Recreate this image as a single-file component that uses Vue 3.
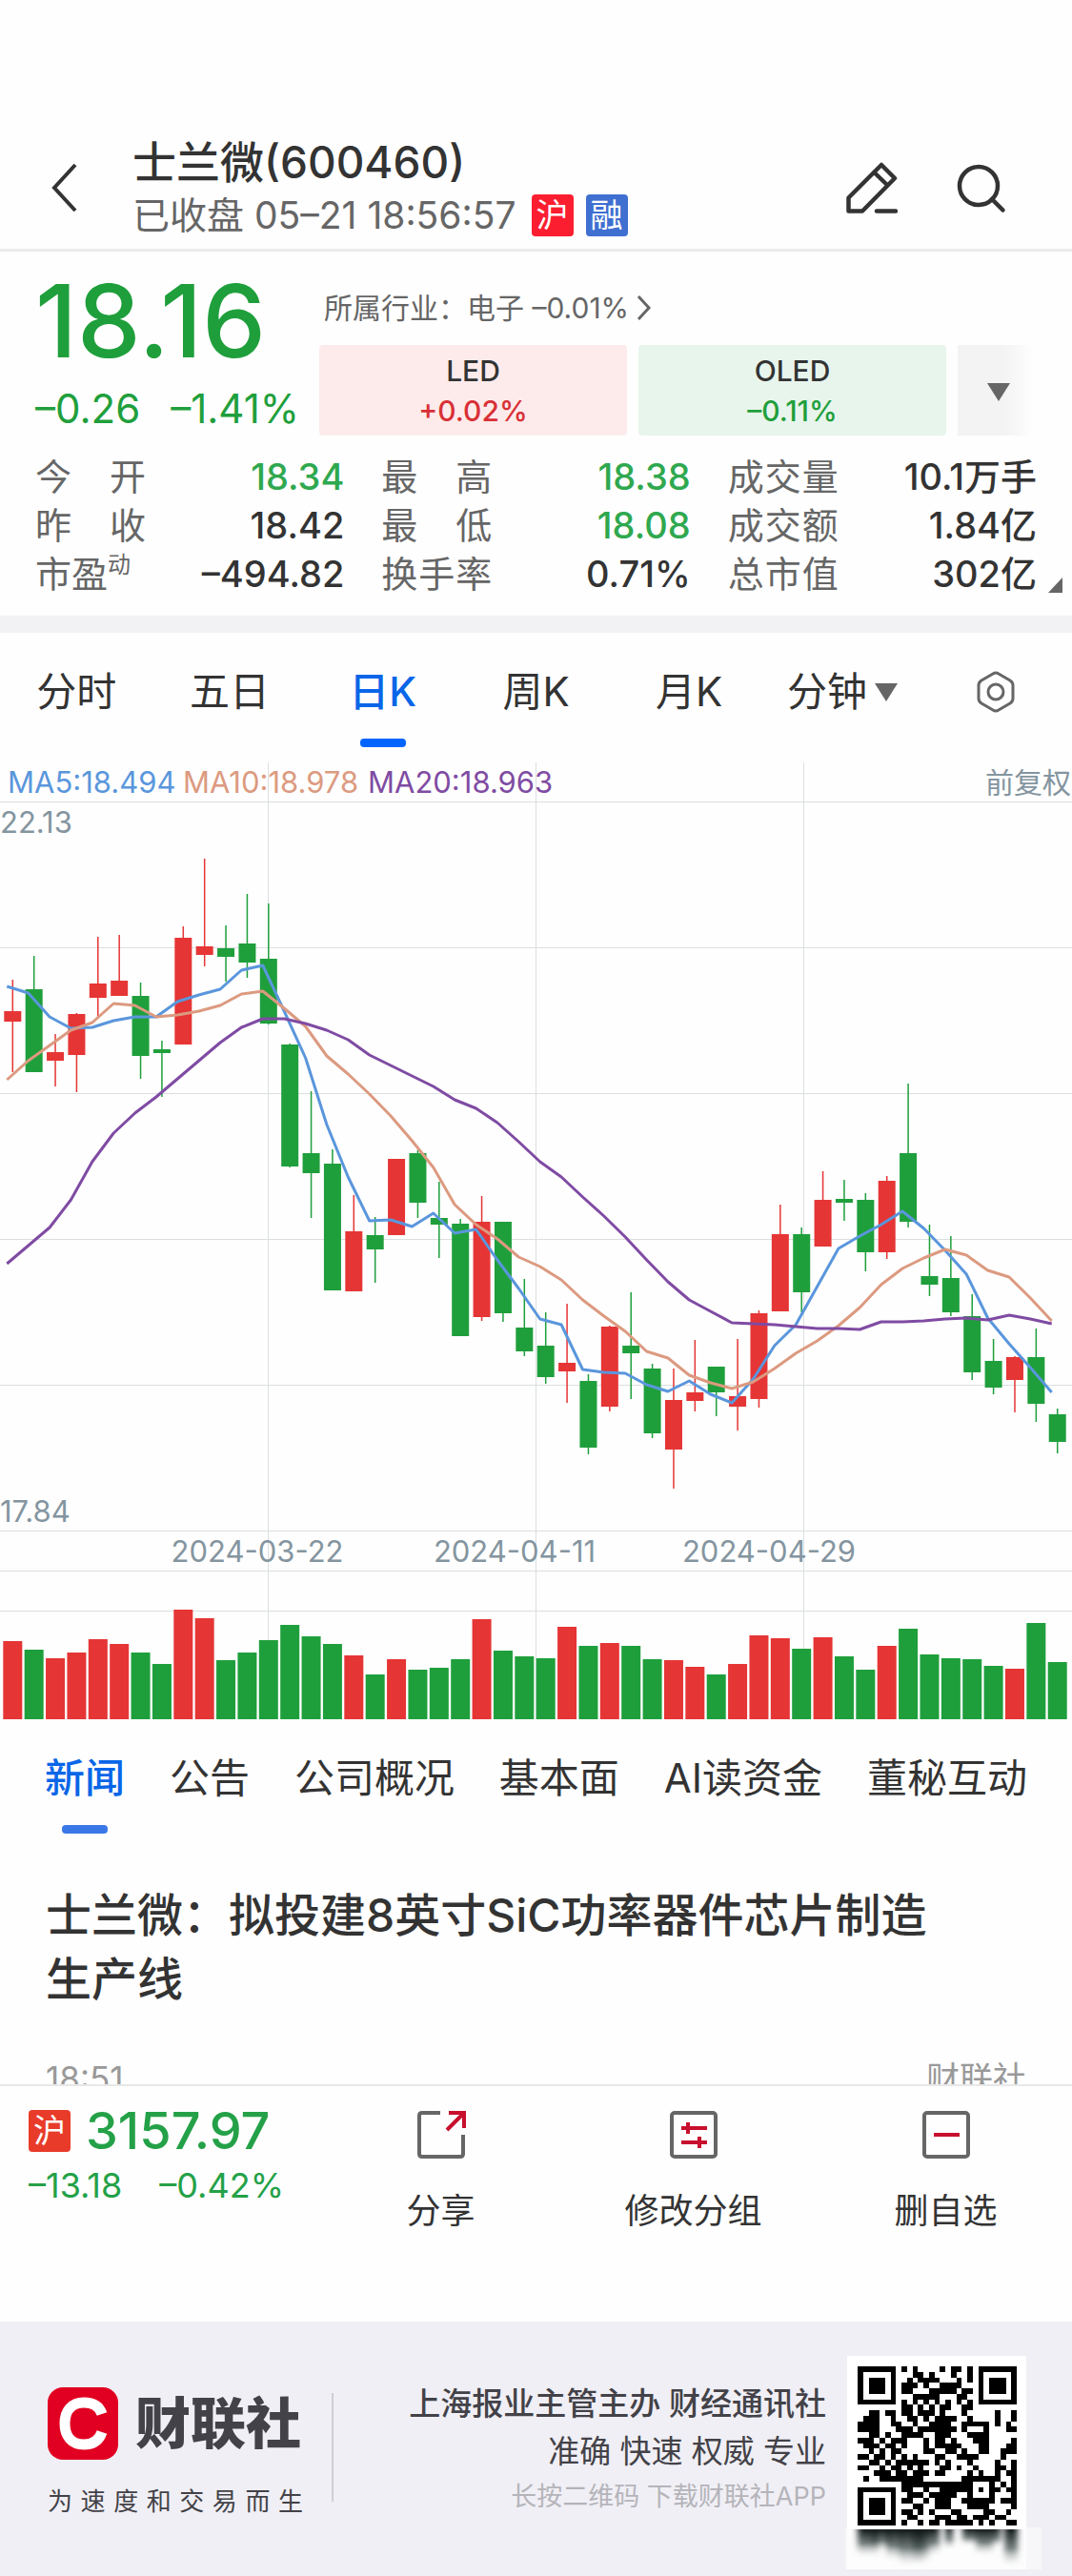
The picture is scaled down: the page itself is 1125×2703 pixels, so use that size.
<script setup>
const quoteStats = [
  { label: '今开', value: '18.34', down: true },
  { label: '最高', value: '18.38', down: true },
  { label: '成交量', value: '10.1万手' },
  { label: '昨收', value: '18.42' },
  { label: '最低', value: '18.08', down: true },
  { label: '成交额', value: '1.84亿' },
  { label: '市盈', sup: '动', value: '–494.82' },
  { label: '换手率', value: '0.71%' },
  { label: '总市值', value: '302亿' }
]

const periods = ['分时', '五日', '日K', '周K', '月K']
const newsTabs = ['新闻', '公告', '公司概况', '基本面', 'AI读资金', '董秘互动']

// Each candle: direction, high, body top, body bottom, low (chart units)
const candles = [
  ['r', 238, 271, 282, 335], ['g', 213, 248, 335, 335], ['r', 295, 314, 323, 350], ['r', 273, 274, 317, 356],
  ['r', 193, 242, 257, 278], ['r', 191, 239, 255, 255], ['g', 241, 255, 318, 342], ['g', 302, 311, 315, 361],
  ['r', 182, 194, 306, 306], ['r', 111, 203, 212, 224], ['g', 181, 205, 214, 240], ['g', 148, 200, 220, 236],
  ['g', 158, 216, 284, 285], ['g', 305, 306, 434, 435], ['g', 355, 420, 441, 488], ['g', 416, 431, 564, 564],
  ['r', 464, 502, 565, 565], ['g', 487, 506, 521, 556], ['r', 426, 426, 506, 506], ['g', 417, 420, 472, 488],
  ['g', 450, 488, 495, 530], ['g', 489, 494, 612, 612], ['r', 465, 492, 592, 596], ['g', 492, 492, 588, 597],
  ['g', 552, 603, 628, 633], ['g', 587, 622, 655, 662], ['r', 578, 640, 649, 682], ['g', 652, 659, 729, 736],
  ['r', 601, 602, 686, 691], ['g', 566, 622, 630, 678], ['g', 641, 646, 714, 719], ['r', 646, 679, 731, 772],
  ['r', 616, 671, 680, 691], ['g', 644, 644, 671, 696], ['r', 615, 675, 686, 711], ['r', 585, 588, 678, 687],
  ['r', 474, 505, 586, 586], ['g', 498, 505, 566, 587], ['r', 439, 469, 518, 518], ['g', 448, 468, 472, 491],
  ['g', 462, 469, 524, 544], ['r', 444, 449, 524, 531], ['g', 347, 420, 492, 498], ['g', 495, 549, 558, 570],
  ['g', 507, 551, 587, 591], ['g', 568, 591, 650, 658], ['g', 615, 638, 666, 673], ['r', 633, 634, 658, 692],
  ['g', 604, 634, 683, 702], ['g', 688, 694, 723, 735]
]
const volumes = [
  82, 73, 64, 70, 84, 79, 70, 58, 115, 106, 62, 70, 83, 99, 87, 79, 67, 47, 63, 52, 54, 63, 105, 72, 66,
  64, 97, 77, 80, 77, 63, 62, 55, 47, 58, 88, 85, 74, 86, 66, 52, 77, 95, 68, 64, 63, 56, 53, 101, 60
]
const ma5 = [
  245, 252, 277, 289, 288, 281, 277, 277, 261, 254, 248, 228, 223, 271, 320, 390, 445, 491, 490, 497, 483, 504, 500, 532, 562,
  594, 600, 647, 650, 651, 663, 670, 659, 673, 682, 657, 622, 600, 560, 520, 507, 495, 481, 499, 522, 547, 593, 620, 645, 671
]
const ma10 = [
  343, 323, 307, 291, 283, 263, 265, 277, 275, 271, 265, 253, 250, 268, 287, 318, 337, 358, 381, 407, 435, 474, 495, 510, 529,
  539, 553, 574, 591, 607, 628, 635, 653, 661, 667, 660, 646, 630, 617, 601, 582, 558, 541, 530, 521, 527, 543, 550, 572, 596
]
const ma20 = [
  536, 517, 498, 469, 429, 399, 378, 361, 342, 323, 304, 288, 279, 279, 284, 291, 301, 317, 328, 339, 350, 364, 373, 388, 408,
  429, 445, 466, 486, 508, 532, 555, 574, 586, 598, 599, 600, 602, 604, 604, 605, 597, 597, 596, 594, 593, 595, 590, 594, 599
]

const step = 22.376
const centre = (i) => 13.3 + i * step
const line = (values) => values.map((y, i) => `${(7.3 + i * step).toFixed(1)},${y}`).join(' ')
const colour = (dir) => (dir === 'r' ? '#e63535' : '#1f9f3c')

const rowLines = [51, 204, 357, 510, 663, 816, 858, 900]
const dateLines = [281, 562, 843]

const qr = [
  '11111110101000010110101111111',
  '10000010001101000100101000001',
  '10111010010111100010101011101',
  '10111010111010011110001011101',
  '10111010110001111101101011101',
  '10000010001111100011001000001',
  '11111110101010101010101111111',
  '00000000110101011001100000000',
  '00110110110111010001000001001',
  '01110010011010111100100001001',
  '11110011001001111001111101010',
  '11110001110111111101000100011',
  '00110100111100111000111100000',
  '11101011100010110100011100001',
  '01110110100010111110001100011',
  '00101011000011001101001100111',
  '11011010101000110011110000100',
  '00110101111110101000100001001',
  '11001011010100011010010001101',
  '00011101101110110000101001011',
  '01001111111100000001111111001',
  '00000000111111111111100010101',
  '11111110110010011111101011011',
  '10000010011101111100100010001',
  '10111010110010111001111110111',
  '10111010001100111000111100001',
  '10111010110101000110000110010',
  '10000010011000111011011101100',
  '11111110100101101111101010011'
]
const qrCells = qr.flatMap((row, y) => [...row].flatMap((c, x) => (c === '1' ? [{ x, y }] : [])))

// Columns of the faded reflection under the code: x, width, length
const streaks = [
  [0, 22, 24], [14, 20, 18], [30, 16, 28], [44, 26, 34], [58, 18, 30], [76, 10, 22],
  [92, 8, 16], [110, 14, 12], [124, 18, 22], [142, 8, 14], [154, 14, 34]
]
</script>

<template>
  <div class="page">
    <header class="bar">
      <button class="icon-btn back" aria-label="返回">
        <svg width="30" height="56" viewBox="0 0 30 56"><path d="M26 4 4 28l22 24" fill="none" stroke="#333" stroke-width="4" /></svg>
      </button>
      <div class="heading">
        <h1>士兰微(600460)</h1>
        <p>已收盘 05–21 18:56:57<span class="tag red">沪</span><span class="tag blue">融</span></p>
      </div>
      <button class="icon-btn edit" aria-label="编辑">
        <svg width="56" height="56" viewBox="0 0 56 56" fill="none" stroke="#333" stroke-width="4.500" stroke-linejoin="round" stroke-linecap="round">
          <path d="M4.500 38.500 39 4l14 14-34 34.500H4.500zM31.500 12 45 25" />
          <path d="M34 52.500h20" />
        </svg>
      </button>
      <button class="icon-btn" aria-label="搜索">
        <svg width="54" height="56" viewBox="0 0 54 56" fill="none" stroke="#333" stroke-width="4.500" stroke-linecap="round">
          <circle cx="25" cy="26" r="20" /><path d="m39 40 11.500 11.500" />
        </svg>
      </button>
    </header>

    <section class="quote">
      <div class="price">
        <strong>18.16</strong>
        <div class="change"><span>–0.26</span><span>–1.41%</span></div>
      </div>
      <div class="sector">
        <a class="industry" href="#">所属行业：<span>电子 –0.01%</span>
          <svg width="16" height="28" viewBox="0 0 16 28"><path d="m2 2 11 12L2 26" fill="none" stroke="#666" stroke-width="3" /></svg>
        </a>
        <div class="boxes">
          <a class="box up" href="#"><span>LED</span><b>+0.02%</b></a>
          <a class="box fall" href="#"><span>OLED</span><b>–0.11%</b></a>
          <button class="more" aria-label="更多"><i class="tri"></i></button>
        </div>
      </div>
    </section>

    <dl class="stats">
      <div v-for="s in quoteStats" :key="s.label" class="stat">
        <dt :class="{ tight: s.sup }"><span v-for="c in s.label" :key="c">{{ c }}</span><sup v-if="s.sup">{{ s.sup }}</sup></dt>
        <dd :class="{ down: s.down }">{{ s.value }}</dd>
      </div>
      <i class="corner"></i>
    </dl>

    <nav class="periods">
      <button v-for="p in periods" :key="p" :class="{ on: p === '日K' }">{{ p }}</button>
      <button>分钟<i class="tri"></i></button>
      <button aria-label="设置">
        <svg width="42" height="44" viewBox="0 0 42 44" fill="none" stroke="#666" stroke-width="3">
          <path d="M18 3q3-2 6 0l12 7q3 2 3 5v14q0 3-3 5l-12 7q-3 2-6 0L6 34q-3-2-3-5V15q0-3 3-5z" /><circle cx="21" cy="22" r="8" />
        </svg>
      </button>
    </nav>

    <svg class="chart" viewBox="0 0 1125 1014" role="img" aria-label="日K线图">
      <g stroke="#dcdfe0" stroke-width="1">
        <line v-for="y in rowLines" :key="y" x1="0" x2="1125" :y1="y + 0.5" :y2="y + 0.5" />
        <line v-for="x in dateLines" :key="x" :x1="x + 0.5" :x2="x + 0.5" y1="10" y2="1014" />
      </g>
      <g v-for="(c, i) in candles" :key="i" :fill="colour(c[0])">
        <rect :x="centre(i) - 0.75" :y="c[1]" width="1.5" :height="c[4] - c[1]" />
        <rect :x="centre(i) - 9" :y="c[2]" width="18" :height="c[3] - c[2]" />
        <rect :x="centre(i) - 10" :y="1014 - volumes[i]" width="20" :height="volumes[i]" />
      </g>
      <g fill="none" stroke-width="3" stroke-linejoin="round">
        <polyline :points="line(ma5)" stroke="#5a96dc" />
        <polyline :points="line(ma10)" stroke="#dc9a80" />
        <polyline :points="line(ma20)" stroke="#7f4ba3" />
      </g>
      <g class="labels">
        <text x="8" y="42" fill="#5a96dc">MA5:18.494</text>
        <text x="192" y="42" fill="#dc9a80">MA10:18.978</text>
        <text x="386" y="42" fill="#7f4ba3">MA20:18.963</text>
        <text x="1124" y="42" class="adjust" text-anchor="end">前复权</text>
        <text x="0" y="84">22.13</text>
        <text x="0" y="807">17.84</text>
        <text x="270" y="849" text-anchor="middle">2024-03-22</text>
        <text x="540" y="849" text-anchor="middle">2024-04-11</text>
        <text x="807" y="849" text-anchor="middle">2024-04-29</text>
      </g>
    </svg>

    <nav class="news-tabs">
      <button v-for="t in newsTabs" :key="t" :class="{ on: t === '新闻' }">{{ t }}</button>
    </nav>

    <article class="news">
      <h2>士兰微：拟投建8英寸SiC功率器件芯片制造生产线</h2>
      <div class="meta"><time>18:51</time><span>财联社</span></div>
    </article>

    <section class="dock">
      <div class="index">
        <div class="index-top"><span class="tag index-tag">沪</span><strong>3157.97</strong></div>
        <div class="index-change"><span>–13.18</span><span>–0.42%</span></div>
      </div>
      <button class="action">
        <svg width="56" height="54" viewBox="0 0 56 54" fill="none" stroke-width="4">
          <path d="M27 4H8q-3 0-3 3v40q0 3 3 3h40q3 0 3-3V27" stroke="#666" /><path d="M34 22 51 5M36 4h16v16" stroke="#c8102e" />
        </svg>
        <span>分享</span>
      </button>
      <button class="action">
        <svg width="56" height="54" viewBox="0 0 56 54" fill="none" stroke-width="4">
          <rect x="5" y="4" width="46" height="46" rx="3" stroke="#666" /><path d="M15 20h27M15 35h27M22 14v12M34 29v12" stroke="#c8102e" />
        </svg>
        <span>修改分组</span>
      </button>
      <button class="action">
        <svg width="56" height="54" viewBox="0 0 56 54" fill="none" stroke-width="4">
          <rect x="5" y="4" width="46" height="46" rx="3" stroke="#666" /><path d="M15 27h27" stroke="#c8102e" />
        </svg>
        <span>删自选</span>
      </button>
    </section>

    <footer class="brand">
      <div class="brand-left">
        <div class="logo">
          <svg width="74" height="76" viewBox="0 0 74 76">
            <rect width="74" height="76" rx="16" fill="#e10021" />
            <path d="M57 28C54 19 47 16 38 16c-13 0-20 9-20 22s7 22 20 22c9 0 16-4 19-13" fill="none" stroke="#fff" stroke-width="11" />
          </svg>
          <b>财联社</b>
        </div>
        <p class="slogan"><span v-for="c in '为速度和交易而生'" :key="c">{{ c }}</span></p>
      </div>
      <div class="brand-text">
        <p class="strong">上海报业主管主办 财经通讯社</p>
        <p>准确 快速 权威 专业</p>
        <p class="hint">长按二维码 下载财联社APP</p>
      </div>
      <svg class="qr" width="206" height="228" viewBox="0 0 206 228" role="img" aria-label="下载二维码">
        <defs>
          <linearGradient id="fade" x1="0" y1="0" x2="0" y2="1">
            <stop offset="0" stop-color="#0a0f10" /><stop offset="0.5" stop-color="#3c4a48" stop-opacity="0.7" /><stop offset="1" stop-color="#fff" stop-opacity="0" />
          </linearGradient>
          <filter id="soft" x="-20%" width="140%"><feGaussianBlur stdDeviation="3 1" /></filter>
        </defs>
        <rect x="2" y="0" width="188" height="182" fill="#fff" />
        <rect x="0" y="180" width="206" height="44" fill="#f7f7fa" />
        <rect x="2" y="180" width="188" height="44" fill="#fdfdfd" />
        <g filter="url(#soft)">
          <rect v-for="s in streaks" :key="s[0]" :x="13 + s[0]" y="181" :width="s[1]" :height="s[2] + 8" fill="url(#fade)" />
        </g>
        <rect x="2" y="178" width="188" height="4" fill="#fff" />
        <g transform="translate(13 11) scale(5.760)" shape-rendering="crispEdges">
          <rect v-for="c in qrCells" :key="c.x + '-' + c.y" :x="c.x" :y="c.y" width="1" height="1" />
        </g>
      </svg>
    </footer>
  </div>
</template>

<style>
body { margin: 0; background: #fff; }
</style>

<style scoped>
.page { font-family: Inter, "Noto Sans CJK SC", sans-serif; color: #333; background: #fefefe; }
h1, h2, p, dl, dd { margin: 0; }
button { border: 0; padding: 0; background: none; font: inherit; color: inherit; cursor: pointer; }
a { color: inherit; text-decoration: none; }
svg { display: block; flex: none; }

.bar { display: flex; align-items: center; padding: 132px 69px 0 53px; height: 129px; border-bottom: 3px solid #ebebeb; }
.icon-btn { display: flex; }
.heading { flex: 1; margin-left: 56px; }
.back { width: 30px; }
.heading h1 { font-size: 46px; line-height: 58px; font-weight: 500; }
.heading p { display: flex; align-items: center; font-size: 39px; line-height: 54px; color: #666; white-space: pre; }
.tag { display: inline-block; width: 44px; height: 44px; border-radius: 4px; color: #fff; font-size: 34px; line-height: 43px; text-align: center; }
.red { background: #fb1e30; margin: 0 13px 0 16px; }
.blue { background: #3f6fd0; }
.edit { margin-right: 60px; }

.quote { display: flex; padding: 18px 40px 0 37px; }
.price { width: 298px; color: #1f9f3c; }
.price strong { display: block; font-size: 106px; line-height: 110px; font-weight: 500; }
.change { display: flex; justify-content: space-between; width: 277px; font-size: 42px; line-height: 50px; margin-top: 12px; }
.sector { flex: 1; }
.industry { display: flex; align-items: center; height: 78px; padding: 2px 0 0 5px; font-size: 30px; line-height: 40px; color: #666; }
.industry svg { margin-left: 8px; }
.boxes { display: flex; gap: 12px; }
.box { flex: 1; display: flex; flex-direction: column; align-items: center; justify-content: center; height: 95px; border-radius: 4px; font-size: 30px; line-height: 42px; font-weight: 500; }
.box b { font-weight: 500; }
.up { background: #fdebeb; }
.up b { color: #d93036; }
.fall { background: #e8f5ec; }
.fall b { color: #1f9f3c; }
.more { display: flex; align-items: center; justify-content: center; width: 80px; background: linear-gradient(90deg, #f3f3f3 60%, #fefefe); }
.tri { width: 0; height: 0; border: 12px solid transparent; border-top: 19px solid #666; border-bottom: 0; }
.more .tri { margin: 4px 0 0 6px; }

.stats { position: relative; display: grid; grid-template-columns: repeat(3, 1fr); column-gap: 39px; padding: 18px 37px; border-bottom: 18px solid #f2f2f4; }
.stat { display: flex; justify-content: space-between; font-size: 38px; line-height: 51px; }
dt { display: flex; justify-content: space-between; width: 116px; color: #666; }
.tight { justify-content: flex-start; }
dt sup { font-size: 24px; line-height: 32px; vertical-align: top; }
dd { font-weight: 500; }
.down { color: #2fa84f; }
.corner { position: absolute; right: 10px; bottom: 24px; border-left: 15px solid transparent; border-bottom: 16px solid #666; }

.periods { display: grid; grid-template-columns: repeat(7, 1fr); height: 126px; font-size: 42px; line-height: 60px; }
.periods button { position: relative; display: flex; align-items: center; justify-content: center; height: 124px; }
.periods .tri { margin-left: 8px; }
.on { color: #0a66e8; font-weight: 500; }
.on::after { content: ""; position: absolute; left: 50%; bottom: 4px; width: 48px; height: 9px; margin-left: -24px; border-radius: 4px; background: #0065ff; }

.chart { width: 100%; height: auto; }
.labels { font-size: 31px; fill: #8495a0; }
.adjust { font-size: 30px; }

.news-tabs { display: flex; justify-content: space-between; padding: 0 47px; height: 124px; font-size: 42px; white-space: nowrap; }
.news-tabs button { position: relative; height: 124px; padding-bottom: 8px; }
.news-tabs .on::after { background: #3b78e7; }

.news { height: 259px; overflow: hidden; padding: 48px 48px 0; box-sizing: border-box; }
h2 { font-size: 48px; line-height: 67px; font-weight: 500; padding-right: 88px; }
.meta { display: flex; justify-content: space-between; align-items: center; margin-top: 44px; font-size: 35px; line-height: 54px; color: #999; }

.dock { display: flex; height: 247px; border-top: 2px solid #e8e8e8; }
.index { width: 300px; padding: 20px 0 0 30px; color: #24a148; }
.index-top { display: flex; align-items: center; }
.index-tag { background: #e83b2a; }
.index-top strong { margin-left: 16px; font-size: 54px; line-height: 54px; font-weight: 500; }
.index-change { display: flex; justify-content: space-between; width: 268px; margin-top: 8px; font-size: 36px; line-height: 44px; }
.action { flex: 1; display: flex; flex-direction: column; align-items: center; height: 160px; padding-top: 24px; font-size: 36px; line-height: 50px; }
.action span { margin-top: 28px; }

.brand { display: flex; height: 267px; padding: 0 32px 0 50px; background: #f0eff5; color: #434248; }
.brand-left { width: 268px; padding: 69px 30px 0 0; }
.logo { display: flex; align-items: center; gap: 18px; }
.logo b { font-size: 58px; line-height: 76px; font-weight: 900; }
.slogan { display: flex; justify-content: space-between; margin-top: 24px; font-size: 26px; line-height: 40px; }
.brand-text { flex: 1; position: relative; padding-top: 61px; margin-right: 20px; text-align: right; font-size: 33px; line-height: 50px; }
.brand-text::before { content: ""; position: absolute; left: 0; top: 75px; width: 2px; height: 114px; background: #cfced4; }
.strong { font-weight: 500; }
.hint { font-size: 27px; line-height: 46px; color: #b5b4ba; }
.qr { margin-top: 36px; }
</style>
